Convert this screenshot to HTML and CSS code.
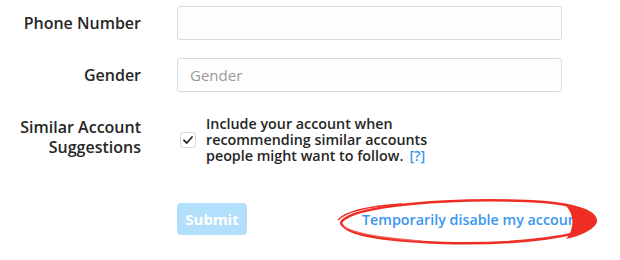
FILE: index.html
```html
<!DOCTYPE html>
<html>
<head>
<meta charset="utf-8">
<link rel="stylesheet" href="styles.css">
</head>
<body>
<form class="form">
  <div class="row">
    <label class="label">Phone Number</label>
    <input class="input" type="text">
  </div>
  <div class="row">
    <label class="label">Gender</label>
    <input class="input" type="text" placeholder="Gender">
  </div>
  <div class="row row-top">
    <label class="label label-multi">Similar Account<br>Suggestions</label>
    <div class="check">
      <span class="box">
        <svg width="12" height="12" viewBox="0 0 12 12"><path d="M2 6.3 L4.8 9 L10 3" fill="none" stroke="#262626" stroke-width="1.8" stroke-linecap="round" stroke-linejoin="round"/></svg>
      </span>
      <span class="check-text">Include your account when recommending similar accounts people might want to follow.<a class="help">[?]</a></span>
    </div>
  </div>
  <div class="row actions-row">
    <span class="label"></span>
    <div class="actions">
      <button class="submit" type="button">Submit</button>
      <a class="disable">Temporarily disable my account</a>
      <svg class="circle" width="270" height="54" viewBox="0 0 270 54">
        <path d="M9 27 C 22 10, 120 3, 195 6 C 245 8, 268 18, 263 28 C 257 41, 185 50, 112 48 C 52 46, 10 39, 9 27" fill="none" stroke="#ee2e24" stroke-width="2.6"/>
        <path d="M6 25 C 14 16, 40 11, 70 9" fill="none" stroke="#ee2e24" stroke-width="1.6"/>
        <path d="M11 31 C 20 38, 50 43, 90 46" fill="none" stroke="#f06a60" stroke-width="1.2"/>
        <path d="M234 11 C 258 15, 268 23, 264 29 C 259 36, 248 41, 234 44 C 242 36, 243 20, 234 11 Z" fill="#ee2e24"/>
      </svg>
    </div>
  </div>
</form>
</body>
</html>
```
FILE: styles.css
```css
html, body {
  margin: 0;
  padding: 0;
  background: #ffffff;
}
body {
  font-family: "Open Sans", "Noto Sans", sans-serif;
  color: #262626;
}
.form {
  padding-top: 6px;
  display: flex;
  flex-direction: column;
}
.row {
  display: grid;
  grid-template-columns: 141px 385px;
  column-gap: 36px;
  align-items: center;
  margin-bottom: 18px;
}
.row-top {
  align-items: start;
  margin-top: 6px;
  margin-bottom: 0;
}
.label {
  text-align: right;
  font-size: 16px;
  font-weight: 600;
  color: #262626;
  line-height: 20px;
  white-space: nowrap;
}
.label-multi {
  padding-top: 1px;
}
.input {
  box-sizing: border-box;
  height: 34px;
  width: 385px;
  border: 1px solid #dbdbdb;
  border-radius: 3px;
  background: #fefefe;
  padding: 0 12px;
  font-family: "Open Sans", "Noto Sans", sans-serif;
  font-size: 15px;
  color: #262626;
  outline: none;
}
.input::placeholder {
  color: #999999;
  font-weight: 400;
}
.check {
  display: flex;
  align-items: center;
  gap: 10px;
  padding-left: 3px;
}
.box {
  box-sizing: border-box;
  width: 16px;
  height: 16px;
  border: 1px solid #dbdbdb;
  border-radius: 3px;
  display: flex;
  align-items: center;
  justify-content: center;
  flex: none;
}
.check-text {
  width: 240px;
  font-size: 14.3px;
  font-weight: 600;
  line-height: 16px;
  color: #262626;
}
.help {
  display: inline-block;
  line-height: 16px;
  color: #3897f0;
  margin-left: 6px;
}
.actions-row {
  margin-top: 39px;
}
.actions {
  position: relative;
  display: flex;
  align-items: center;
  height: 32px;
}
.submit {
  flex: none;
  width: 70px;
  height: 32px;
  border: none;
  border-radius: 4px;
  background: #b2dffc;
  color: #ffffff;
  font-family: "Open Sans", "Noto Sans", sans-serif;
  font-size: 15px;
  font-weight: 700;
  padding: 0;
}
.disable {
  flex: none;
  margin-left: 115px;
  color: #3897f0;
  font-size: 14.3px;
  font-weight: 600;
  white-space: nowrap;
}
.circle {
  position: absolute;
  left: 155px;
  top: -8px;
}
```
